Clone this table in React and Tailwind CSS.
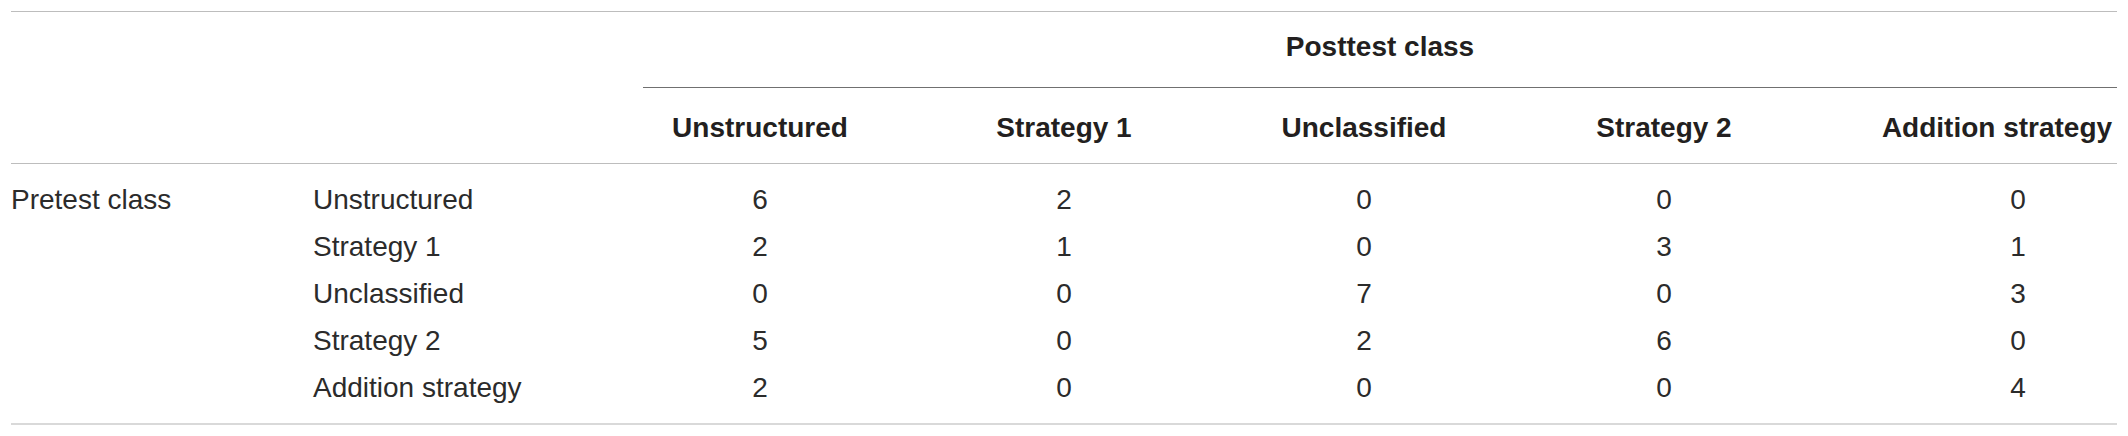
import React from "react";

const columns = ["Unstructured", "Strategy 1", "Unclassified", "Strategy 2", "Addition strategy"];

const rows = [
  { label: "Unstructured", values: [6, 2, 0, 0, 0] },
  { label: "Strategy 1", values: [2, 1, 0, 3, 1] },
  { label: "Unclassified", values: [0, 0, 7, 0, 3] },
  { label: "Strategy 2", values: [5, 0, 2, 6, 0] },
  { label: "Addition strategy", values: [2, 0, 0, 0, 4] },
];

// widths of the five data columns, last one nudged right
const headClass = [
  "w-[234px] text-center",
  "w-[374px] text-center",
  "w-[226px] text-center",
  "w-[374px] text-center",
  "w-[266px] pl-[26px] text-center",
];
const cellClass = [
  "w-[234px] text-center",
  "w-[374px] text-center",
  "w-[226px] text-center",
  "w-[374px] text-center",
  "w-[266px] pl-[68px] text-center",
];

function App() {
  return (
    <div className="bg-white w-[2128px] h-[436px] pt-[11px] px-[11px] text-[28px] text-[#231f20] font-['Liberation_Sans',Arial,sans-serif]">
      <div className="border-t border-[#bdbdbd]">
        {/* spanning header */}
        <div className="flex">
          <div className="w-[632px] shrink-0" />
          <div className="flex-1 h-[76px] pt-[21px] leading-[28px] font-bold text-center border-b border-[#707070]">
            Posttest class
          </div>
        </div>

        {/* column headers */}
        <div className="flex h-[76px] pt-[26px] leading-[28px] font-bold border-b border-[#bdbdbd]">
          <div className="w-[632px] shrink-0" />
          {columns.map((c, i) => (
            <div key={c} className={headClass[i] + " shrink-0 whitespace-nowrap"}>
              {c}
            </div>
          ))}
        </div>

        {/* body */}
        <div className="pt-[12px] pb-[12px] border-b-2 border-[#d9d9d9] text-[#2b2b2b]">
          {rows.map((r, ri) => (
            <div key={r.label} className="flex h-[47px] leading-[47px]">
              <div className="w-[302px] shrink-0 whitespace-nowrap">{ri === 0 ? "Pretest class" : ""}</div>
              <div className="w-[330px] shrink-0 whitespace-nowrap">{r.label}</div>
              {r.values.map((v, i) => (
                <div key={i} className={cellClass[i] + " shrink-0"}>
                  {v}
                </div>
              ))}
            </div>
          ))}
        </div>
      </div>
    </div>
  );
}

export default App;
